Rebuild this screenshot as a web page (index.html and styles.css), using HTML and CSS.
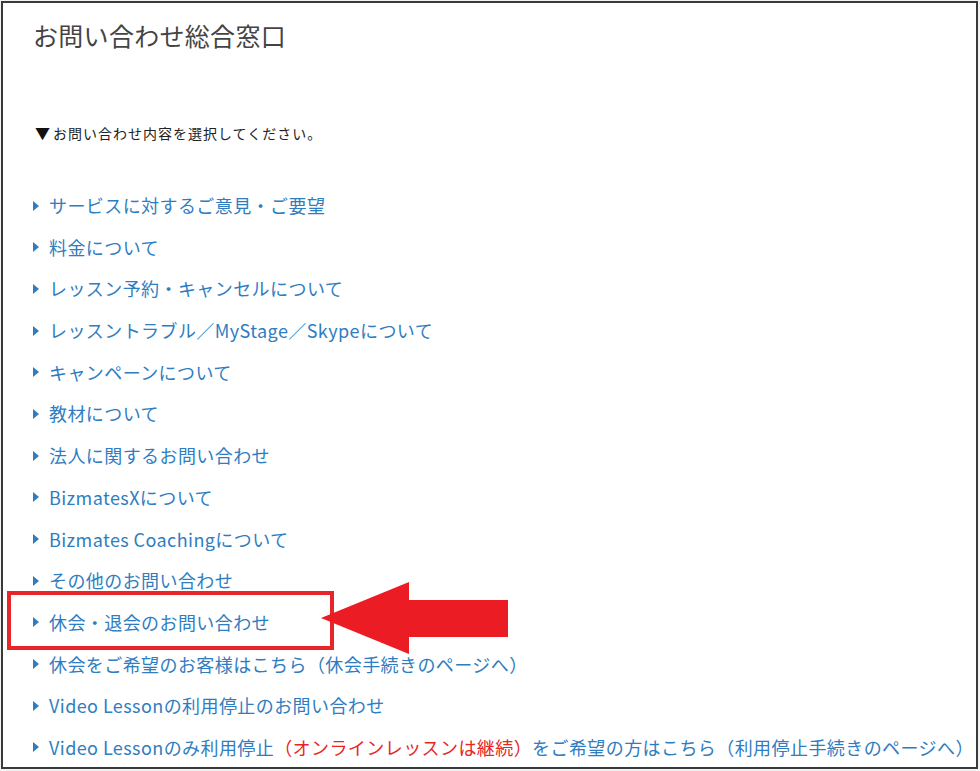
FILE: index.html
```html
<!DOCTYPE html>
<html lang="ja">
<head>
<meta charset="utf-8">
<title>お問い合わせ総合窓口</title>
<link rel="stylesheet" href="styles.css">
</head>
<body>
<div class="frame">
  <h1 class="title">お問い合わせ総合窓口</h1>
  <p class="lead"><span class="down">▼</span>お問い合わせ内容を選択してください。</p>
  <ul class="menu">
    <li><a href="#">サービスに対するご意見・ご要望</a></li>
    <li><a href="#">料金について</a></li>
    <li><a href="#">レッスン予約・キャンセルについて</a></li>
    <li><a href="#">レッスントラブル／MyStage／Skypeについて</a></li>
    <li><a href="#">キャンペーンについて</a></li>
    <li><a href="#">教材について</a></li>
    <li><a href="#">法人に関するお問い合わせ</a></li>
    <li><a href="#">BizmatesXについて</a></li>
    <li><a href="#">Bizmates Coachingについて</a></li>
    <li><a href="#">その他のお問い合わせ</a></li>
    <li><a href="#">休会・退会のお問い合わせ</a></li>
    <li><a href="#">休会をご希望のお客様はこちら（休会手続きのページへ）</a></li>
    <li><a href="#">Video Lessonの利用停止のお問い合わせ</a></li>
    <li><a href="#">Video Lessonのみ利用停止<span class="red">（オンラインレッスンは継続）</span>をご希望の方はこちら（利用停止手続きのページへ）</a></li>
  </ul>
  <div class="highlight"></div>
  <svg class="arrow" width="190" height="74" viewBox="318 581 190 74" xmlns="http://www.w3.org/2000/svg">
    <polygon points="320,618 408,582 408,600 507,600 507,637 408,637 408,654" fill="#ec1c24"/>
  </svg>
</div>
</body>
</html>
```

FILE: styles.css
```css
html, body {
  margin: 0;
  padding: 0;
}
body {
  background: #f2f2f2;
  font-family: "Noto Sans CJK JP", "Noto Sans", sans-serif;
  padding: 1px;
}
.frame {
  position: relative;
  box-sizing: border-box;
  width: 977px;
  height: 768px;
  border: 2px solid #3a3a3a;
  background: #fff;
  padding: 14px 0 0 30px;
  overflow: hidden;
}
.title {
  margin: 0;
  font-size: 25px;
  font-weight: 400;
  line-height: 36px;
  color: #444;
  letter-spacing: 0.3px;
}
.lead {
  margin: 70px 0 0 2px;
  font-size: 14px;
  line-height: 20px;
  color: #222;
  letter-spacing: 1px;
}
.down {
  display: inline-block;
  width: 18px;
  font-size: 15px;
  color: #111;
  letter-spacing: 0;
}
.menu {
  list-style: none;
  margin: 42px 0 0 0;
  padding: 0;
}
.menu li {
  position: relative;
  line-height: 41.7px;
  height: 41.7px;
  padding-left: 16px;
  font-size: 18px;
  letter-spacing: 0.42px;
  white-space: nowrap;
}
.menu li::before {
  content: "";
  position: absolute;
  left: 0;
  top: 15.5px;
  border-style: solid;
  border-width: 5.5px 0 5.5px 6.5px;
  border-color: transparent transparent transparent #2f7dc1;
}
.menu a {
  color: #2f7dc1;
  text-decoration: none;
}
.red {
  color: #e8261e;
}
.highlight {
  position: absolute;
  left: 4px;
  top: 588px;
  width: 327px;
  height: 59px;
  box-sizing: border-box;
  border: 4px solid #e8262a;
}
.arrow {
  position: absolute;
  left: 316px;
  top: 578px;
}
```
